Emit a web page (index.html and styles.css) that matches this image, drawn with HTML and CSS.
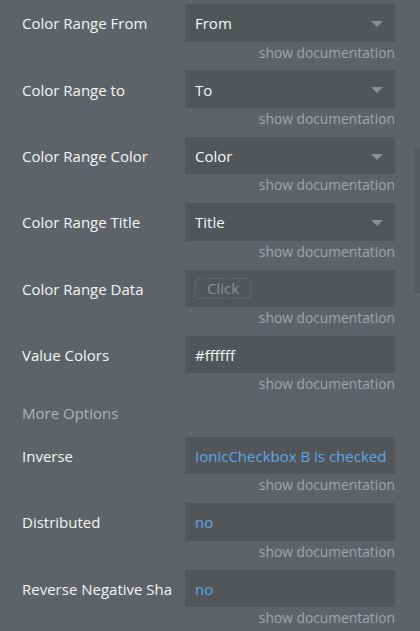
FILE: index.html
```html
<!DOCTYPE html>
<html>
<head>
<meta charset="utf-8">
<link rel="stylesheet" href="styles.css">
</head>
<body>
<div class="panel">
  <div class="prop">
    <div class="row">
      <div class="label">Color Range From</div>
      <div class="field select"><span class="val">From</span><span class="caret"></span></div>
    </div>
    <div class="doc">show documentation</div>
  </div>
  <div class="prop">
    <div class="row">
      <div class="label">Color Range to</div>
      <div class="field select"><span class="val">To</span><span class="caret"></span></div>
    </div>
    <div class="doc">show documentation</div>
  </div>
  <div class="prop">
    <div class="row">
      <div class="label">Color Range Color</div>
      <div class="field select"><span class="val">Color</span><span class="caret"></span></div>
    </div>
    <div class="doc">show documentation</div>
  </div>
  <div class="prop">
    <div class="row">
      <div class="label">Color Range Title</div>
      <div class="field select"><span class="val">Title</span><span class="caret"></span></div>
    </div>
    <div class="doc">show documentation</div>
  </div>
  <div class="prop">
    <div class="row">
      <div class="label">Color Range Data</div>
      <div class="field"><span class="click">Click</span></div>
    </div>
    <div class="doc">show documentation</div>
  </div>
  <div class="prop">
    <div class="row">
      <div class="label">Value Colors</div>
      <div class="field"><span class="val">#ffffff</span></div>
    </div>
    <div class="doc">show documentation</div>
  </div>
  <div class="section">More Options</div>
  <div class="prop">
    <div class="row">
      <div class="label">Inverse</div>
      <div class="field"><span class="val dyn">IonicCheckbox B is checked</span></div>
    </div>
    <div class="doc">show documentation</div>
  </div>
  <div class="prop">
    <div class="row">
      <div class="label">Distributed</div>
      <div class="field"><span class="val dyn">no</span></div>
    </div>
    <div class="doc">show documentation</div>
  </div>
  <div class="prop">
    <div class="row">
      <div class="label">Reverse Negative Sha</div>
      <div class="field"><span class="val dyn">no</span></div>
    </div>
    <div class="doc">show documentation</div>
  </div>
</div>
<div class="scrollbar"></div>
</body>
</html>
```

FILE: styles.css
```css
html, body {
  margin: 0;
  padding: 0;
  height: 100%;
  overflow: hidden;
}
body {
  background: #5f6367;
  font-family: "Open Sans", "Noto Sans", sans-serif;
  font-size: 15px;
  color: #f2f2f2;
}
.panel {
  padding: 4px 0 0 22px;
  width: 373px;
}
.prop {
  margin-bottom: 6.9px;
}
.row {
  display: flex;
  align-items: center;
  height: 37.5px;
}
.label {
  width: 163px;
  flex: none;
  white-space: nowrap;
  overflow: hidden;
  color: #f4f4f4;
  line-height: 20px;
  padding-top: 1px;
}
.field {
  width: 210px;
  height: 37.5px;
  background: #525659;
  display: flex;
  align-items: center;
  padding: 0 10px;
  box-sizing: border-box;
  position: relative;
}
.val {
  color: #f6f6f6;
  line-height: 20px;
  white-space: nowrap;
  padding-top: 1px;
}
.val.dyn {
  color: #5ea6ec;
}
.caret {
  position: absolute;
  right: 12px;
  top: 17px;
  width: 0;
  height: 0;
  border-left: 6px solid transparent;
  border-right: 6px solid transparent;
  border-top: 6px solid #8b8f92;
}
.click {
  color: #8e9194;
  border: 1px dashed #696d70;
  border-radius: 2px;
  padding: 0 11px;
  line-height: 19px;
}
.doc {
  text-align: right;
  color: #a2a5a8;
  font-size: 13.8px;
  line-height: 22px;
}
.section {
  color: #b0b3b6;
  line-height: 22px;
  margin: 0 0 12.5px 0;
}
.scrollbar {
  position: absolute;
  left: 414px;
  top: 148px;
  width: 6px;
  height: 145px;
  background: #585c60;
}
```
